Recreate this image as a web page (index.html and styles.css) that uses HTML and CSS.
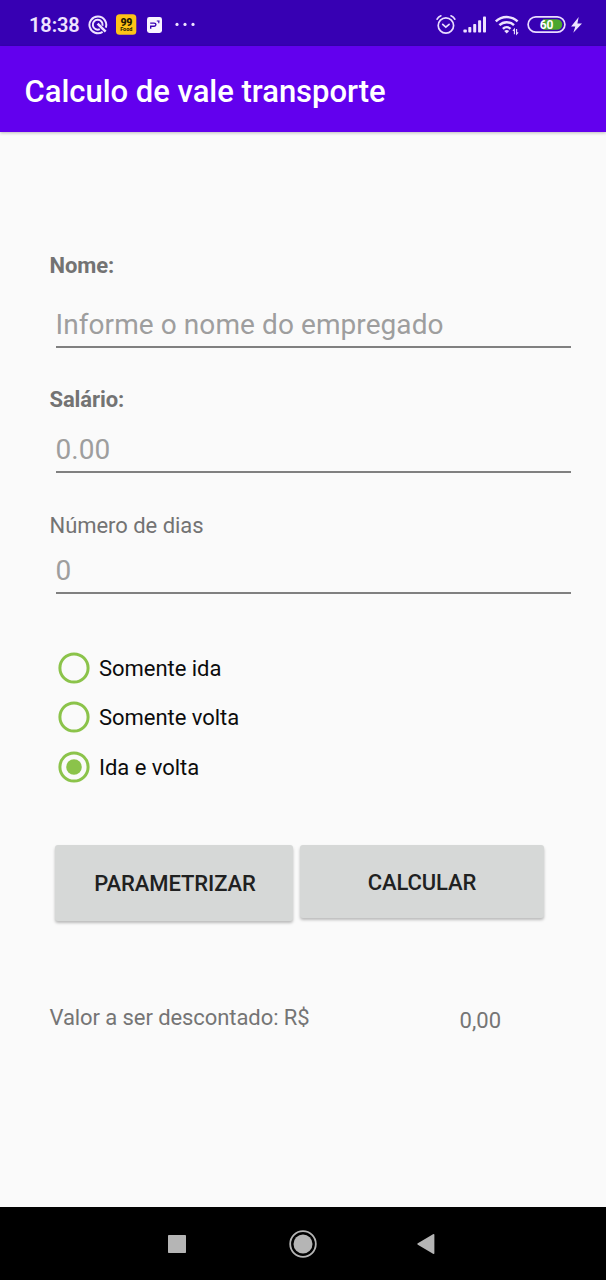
FILE: index.html
```html
<!DOCTYPE html>
<html lang="pt-BR">
<head>
<meta charset="utf-8">
<title>Calculo de vale transporte</title>
<link rel="stylesheet" href="styles.css">
</head>
<body>
<div class="screen">
  <header class="status">
    <span class="clock">18:38</span>
    <svg class="status-left" width="112" height="46" viewBox="88 0 112 46">
      <path d="M102.6 31.8A8.4 8.4 0 1 1 105.8 27.6" fill="none" stroke="#eee3ff" stroke-width="2"/>
      <path d="M99.8 29.2A4.9 4.9 0 1 1 102.5 25.8" fill="none" stroke="#eee3ff" stroke-width="2"/>
      <path d="M97.6 23.6L105.6 31.6" fill="none" stroke="#eee3ff" stroke-width="2.5"/>
      <rect x="116" y="14.2" width="20.3" height="20.6" rx="3.5" fill="#fec317"/>
      <text text-anchor="middle"><tspan class="badge-number" x="126.3" y="25.8">99</tspan><tspan class="badge-food" x="126.3" y="31.2">Food</tspan></text>
      <rect x="147" y="17" width="15" height="16" rx="2.4" fill="#f8f4ff"/>
      <path d="M150.7 28.7v-2.4h3.4q1.8 0 1.8-1.7 0-1.5-1.8-1.5h-3.9" fill="none" stroke="#3700b3" stroke-width="1.4"/>
      <path d="M156.8 21h2.8M158.8 20.4v2.8" stroke="#3700b3" stroke-width="1.1"/>
      <g fill="#eee3ff"><circle cx="177" cy="24.4" r="1.6"/><circle cx="185" cy="24.4" r="1.6"/><circle cx="193" cy="24.4" r="1.6"/></g>
    </svg>
    <svg class="status-right" width="152" height="46" viewBox="434 0 152 46">
      <g fill="none" stroke="#e9dcff" stroke-width="1.7" stroke-linecap="round">
        <circle cx="445.9" cy="25.5" r="7.7"/>
        <path d="M442.7 24.4l3.1 2.7 3.3-2.8M437.1 19.2q1.2-2.4 3.8-3.4M451 15.8q2.6 1 3.8 3.4"/>
      </g>
      <g fill="#eee3ff">
        <rect x="463.4" y="29.6" width="3.4" height="3" rx=".8"/>
        <rect x="468.3" y="27" width="3" height="5.6" rx=".8"/>
        <rect x="473.2" y="24" width="3" height="8.6" rx=".8"/>
        <rect x="478.1" y="20.3" width="3" height="12.3" rx=".8"/>
        <rect x="483" y="16.4" width="3" height="16.2" rx=".8"/>
      </g>
      <path d="M495.8 21.4a15.8 15.8 0 0 1 21.8 0M499.4 25.2a10.4 10.4 0 0 1 14.6 0M502.9 28.8a5.4 5.4 0 0 1 7.6 0" fill="none" stroke="#eee3ff" stroke-width="2.4"/>
      <path d="M504.2 31q2.5-2 5 0l-2.5 2.6z" fill="#eee3ff"/>
      <path d="M514.4 34.2v-5l-1.5 1.6M516.6 29v5l1.5-1.7" fill="none" stroke="#eee3ff" stroke-width="1.1"/>
      <rect x="528.1" y="16.8" width="36.8" height="15.4" rx="7.7" fill="#3700b3" stroke="#e9dcff" stroke-width="1.7"/>
      <path d="M543 19.2h14a5.3 5.3 0 0 1 0 10.6h-14z" fill="#4ba72e"/>
      <text class="battery-text" x="546.6" y="28.9" text-anchor="middle">60</text>
      <path d="M578.7 17l-7.6 9.4h4.2l-2 6.4 8.7-9.2h-4.6z" fill="#eee3ff"/>
    </svg>
  </header>
  <div class="appbar"><h1 class="title">Calculo de vale transporte</h1></div>
  <main class="content">
    <section class="field field-name">
      <label class="label bold">Nome:</label>
      <div class="input">Informe o nome do empregado</div>
    </section>
    <section class="field field-salary">
      <label class="label bold">Salário:</label>
      <div class="input">0.00</div>
    </section>
    <section class="field field-days">
      <label class="label">Número de dias</label>
      <div class="input">0</div>
    </section>
    <div class="radios">
      <div class="radio"><svg width="32" height="32"><circle class="ring" cx="16" cy="16" r="14.1"/></svg><span>Somente ida</span></div>
      <div class="radio"><svg width="32" height="32"><circle class="ring" cx="16" cy="16" r="14.1"/></svg><span>Somente volta</span></div>
      <div class="radio"><svg width="32" height="32"><circle class="ring" cx="16" cy="16" r="14.1"/><circle class="dot" cx="16" cy="16" r="7.8"/></svg><span>Ida e volta</span></div>
    </div>
    <div class="actions">
      <div class="button set">PARAMETRIZAR</div>
      <div class="button calc">CALCULAR</div>
    </div>
    <div class="result"><span class="caption">Valor a ser descontado: R$</span><span class="amount">0,00</span></div>
  </main>
  <nav class="navbar">
    <svg width="18" height="18"><rect width="18" height="18" rx=".7"/></svg>
    <svg class="home" width="28" height="28"><circle cx="14" cy="14" r="12.8" fill="none" stroke="#b5b5b5" stroke-width="1.8"/><circle cx="14" cy="14" r="9.5"/></svg>
    <svg width="18" height="20"><path d="M.8 9.3L16 .3q1.4-.6 1.4.7v18q0 1.3-1.4.7L.8 10.7q-1-.7 0-1.4z"/></svg>
  </nav>
</div>
</body>
</html>
```

FILE: styles.css
```css
* { box-sizing: border-box; }
body { margin: 0; font-family: Roboto, sans-serif; background: #fafafa; }
svg { display: block; flex: none; }
.screen { width: 606px; height: 1280px; display: flex; flex-direction: column; overflow: hidden; }
.status { height: 46px; flex: none; display: flex; align-items: center; background: #3700b3; padding: 0 20px 0 29px; }
.clock { width: 59px; padding-top: 4px; font-size: 20px; font-weight: 600; line-height: 24px; letter-spacing: -.1px; color: #eee3ff; white-space: nowrap; }
.status-right { margin-left: auto; }
.badge-number { font-size: 10.5px; font-weight: 900; fill: #211800; letter-spacing: -.2px; }
.badge-food { font-size: 5.5px; font-weight: 700; fill: #211800; }
.battery-text { font-size: 12px; font-weight: 700; fill: #fff; }
.appbar { height: 86px; flex: none; display: flex; align-items: center; padding: 6px 24.5px 0; background: #6200ee; box-shadow: 0 1px 3px rgba(0, 0, 0, .25); }
.title { margin: 0; font-size: 31px; font-weight: 500; line-height: 36px; letter-spacing: -.02px; color: #fff; white-space: nowrap; }
.content { flex: 1; padding: 121px 35px 0 49.5px; }
.field { display: flex; flex-direction: column; }
.label { font-size: 22px; line-height: 26px; letter-spacing: -.04px; color: #737373; }
.bold { font-weight: 700; letter-spacing: -.1px; }
.input { margin-left: 6px; font-size: 28px; line-height: 34px; letter-spacing: .08px; color: #9e9e9e; border-bottom: 2px solid #808080; }
.field-name .input { margin-top: 29px; padding-bottom: 4px; }
.field-salary { margin-top: 39px; }
.field-salary .input { margin-top: 20px; padding-bottom: 4px; }
.field-days { margin-top: 40px; }
.field-days .input { margin-top: 15px; padding-bottom: 4px; }
.radios { margin: 49px 0 0 8.5px; }
.radio { display: flex; align-items: center; gap: 9px; height: 49.5px; font-size: 22px; line-height: 26px; letter-spacing: -.04px; color: #0c0c0c; }
.radio span { padding-top: 2px; }
.ring { fill: none; stroke: #8bc34a; stroke-width: 3; }
.dot { fill: #8bc34a; }
.actions { display: flex; align-items: flex-start; gap: 7px; margin: 53px 0 0 5.5px; }
.button { display: flex; align-items: center; justify-content: center; font-size: 22px; font-weight: 500; letter-spacing: -.1px; color: #202121; background: #d6d8d7; border-radius: 3px; box-shadow: 0 2px 3px rgba(0, 0, 0, .26); }
.set { width: 238px; height: 76px; padding: 2px 0 0 2px; }
.calc { width: 244px; height: 73px; padding-top: 2px; }
.result { display: flex; justify-content: space-between; margin-top: 84px; padding-right: 70px; font-size: 22px; line-height: 26px; color: #757575; }
.caption { letter-spacing: -.08px; }
.amount { padding-top: 3px; }
.navbar { height: 73px; flex: none; display: flex; justify-content: space-between; align-items: center; padding: 0 171px 0 168px; background: #000; fill: #b5b5b5; }
.home { margin-left: 2px; }
```
